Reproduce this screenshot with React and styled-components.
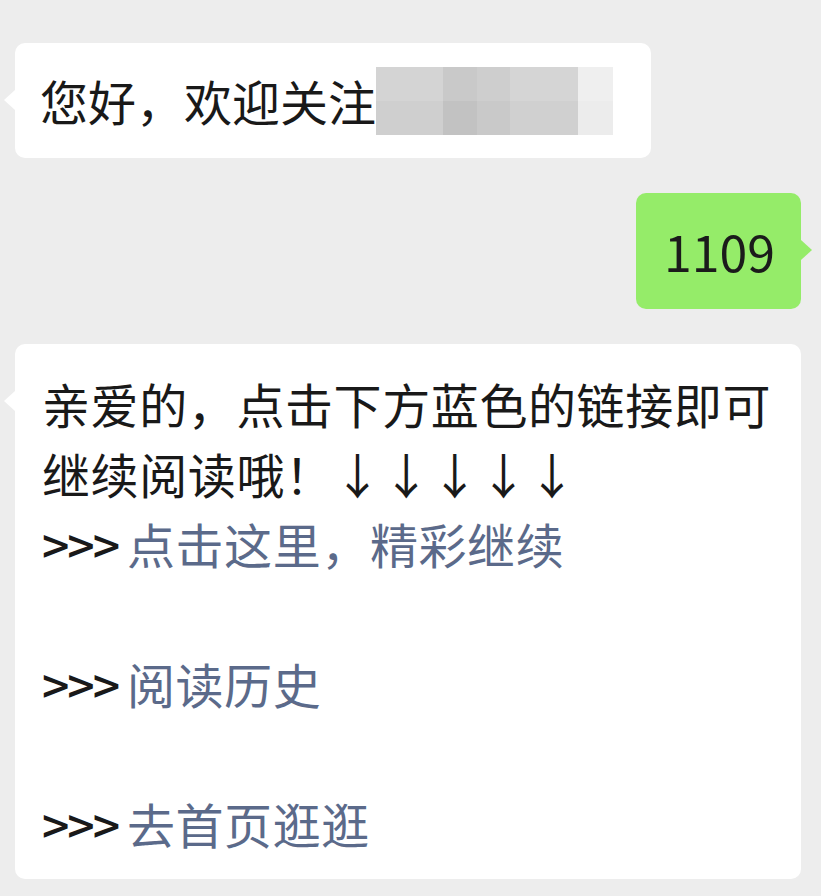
import React from 'react';
import styled, { createGlobalStyle } from 'styled-components';

const GlobalStyle = createGlobalStyle`
	html, body {
		margin: 0;
		padding: 0;
		background: #ededed;
	}
	body {
		font-family: 'Noto Sans CJK SC', 'Noto Sans', sans-serif;
		color: #191919;
	}
`;

const Chat = styled.div`
	display: flex;
	flex-direction: column;
	gap: 35px;
	padding: 43px 20px 16px 15px;
	min-height: 896px;
	box-sizing: border-box;
`;

const Row = styled.div`
	display: flex;
	justify-content: ${(p) => (p.$mine ? 'flex-end' : 'flex-start')};
`;

const Bubble = styled.div`
	position: relative;
	box-sizing: border-box;
	width: ${(p) => p.$width || 'auto'};
	padding: ${(p) => p.$padding || '22px 27px'};
	border-radius: 10px;
	background: ${(p) => (p.$mine ? '#95ec69' : '#ffffff')};
	font-size: 48px;
	line-height: 70px;
	letter-spacing: ${(p) => p.$tracking || '0.6px'};
	white-space: pre-wrap;
	word-break: break-all;

	&::before {
		content: '';
		position: absolute;
		top: 47px;
		${(p) => (p.$mine ? 'right: -11px;' : 'left: -11px;')}
		border-style: solid;
		border-width: 10px ${(p) => (p.$mine ? '0 10px 11px' : '11px 10px 0')};
		border-color: transparent;
		${(p) =>
			p.$mine ? 'border-left-color: #95ec69;' : 'border-right-color: #ffffff;'}
	}
`;

const Digits = styled.span`
	font-size: 50px;
	letter-spacing: 0;
	color: #1b1b1b;
`;

const Prompt = styled.span`
	letter-spacing: -2px;
	font-weight: 500;
`;

const Link = styled.span`
	color: #5b6a8a;
`;

const Mosaic = styled.span`
	display: inline-grid;
	grid-template-columns: 67px 34px 33px 68px 35px;
	grid-template-rows: 34px 34px;
	vertical-align: top;
	margin-top: 2px;
`;

const Tile = styled.span`
	background: ${(p) => p.$color};
`;

const mosaicColors = [
	'#d4d4d4', '#c9c9c9', '#cecece', '#d5d5d5', '#efefef',
	'#cfcfcf', '#c2c2c2', '#c9c9c9', '#d0d0d0', '#ececec',
];

const links = ['点击这里，精彩继续', '阅读历史', '去首页逛逛'];

export default function App() {
	return (
		<>
			<GlobalStyle />
			<Chat>
				<Row>
					<Bubble $padding='22px 38px 23px 25px' $tracking='0'>
						您好，欢迎关注
						<Mosaic>
							{mosaicColors.map((c, i) => (
								<Tile key={i} $color={c} />
							))}
						</Mosaic>
					</Bubble>
				</Row>
				<Row $mine>
					<Bubble $mine $padding='22px 26px 23px 28px'>
						<Digits>1109</Digits>
					</Bubble>
				</Row>
				<Row>
					<Bubble $width='786px' $padding='24px 27px 21px 27px'>
						{'亲爱的，点击下方蓝色的链接即可继续阅读哦！↓↓↓↓↓\n'}
						{links.map((text, i) => (
							<React.Fragment key={text}>
								{i > 0 && '\n\n'}
								<Prompt>{'>>> '}</Prompt>
								<Link>{text}</Link>
							</React.Fragment>
						))}
					</Bubble>
				</Row>
			</Chat>
		</>
	);
}
